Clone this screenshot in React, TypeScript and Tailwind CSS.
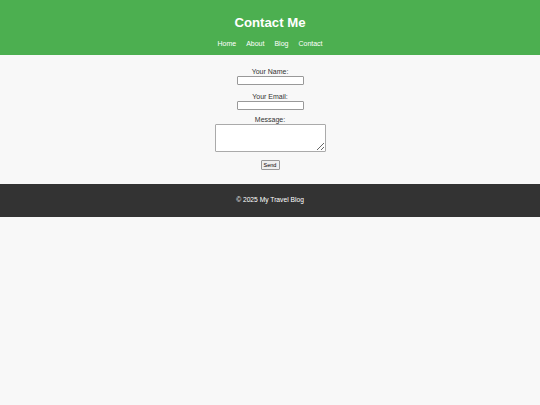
import React from 'react';

const links = ['Home', 'About', 'Blog', 'Contact'];

export default function App() {
  return (
    <div className="min-h-[405px] bg-[#f8f8f8] font-['Liberation_Sans',Arial,sans-serif] text-[#333]">
      <header className="flex h-[55px] flex-col items-center bg-[#4caf50] pt-[15px] text-white">
        <h1 className="text-[13.2px] font-bold leading-[16px]">Contact Me</h1>
        <nav className="mt-[8px] flex gap-[10px] text-[7px] leading-[10px]">
          {links.map((l) => (
            <a key={l} href="#" className="text-white">
              {l}
            </a>
          ))}
        </nav>
      </header>

      <main className="flex flex-col items-center pt-[12px] pb-[14px] text-[7px] leading-[8px]">
        <label className="flex flex-col items-center">
          <span className="pt-[1px]">Your Name:</span>
          <input
            type="text"
            className="h-[9px] w-[67px] rounded-[1px] border border-[#999] bg-white"
          />
        </label>
        <label className="mt-[7px] flex flex-col items-center">
          <span className="pt-[1px]">Your Email:</span>
          <input
            type="email"
            className="h-[9px] w-[67px] rounded-[1px] border border-[#999] bg-white"
          />
        </label>
        <label className="mt-[5px] flex flex-col items-center">
          <span className="pt-[1px]">Message:</span>
          <textarea className="h-[28px] w-[111px] resize rounded-[1px] border border-[#aaa] bg-white" />
        </label>
        <button className="mt-[8px] flex h-[10px] w-[19px] items-center justify-center rounded-[1px] border border-[#999] bg-[#efefef] text-[5.5px] leading-[6px] text-black">
          Send
        </button>
      </main>

      <footer className="flex h-[33px] items-center justify-center bg-[#333333] text-[6.7px] text-white">
        © 2025 My Travel Blog
      </footer>
    </div>
  );
}
